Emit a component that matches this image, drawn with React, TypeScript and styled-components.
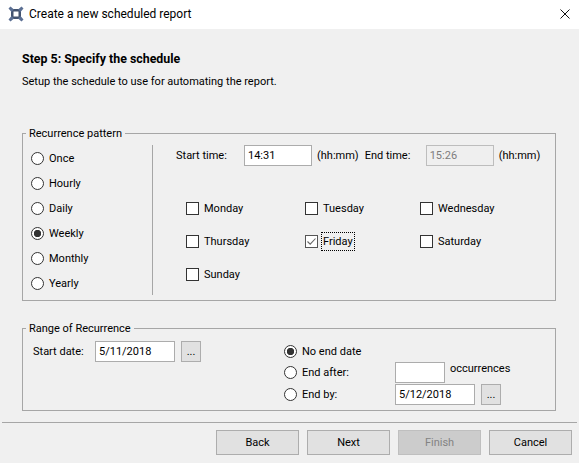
import React from 'react'
import styled, { createGlobalStyle } from 'styled-components'

const GlobalStyle = createGlobalStyle`
  html, body {
    margin: 0;
    padding: 0;
    background: #f0f0f0;
  }
  * {
    box-sizing: border-box;
  }
  body {
    font-family: Roboto, "Noto Sans", sans-serif;
    font-size: 11px;
    color: #000;
  }
`

const Window = styled.div`
  width: 579px;
  height: 463px;
  overflow: hidden;
  display: flex;
  flex-direction: column;
`
const TitleBar = styled.div`
  height: 29px;
  flex: none;
  background: #fff;
  display: flex;
  align-items: center;
  padding: 0 9px 1px 8px;
  gap: 5px;
  font-size: 12px;
`
const TitleText = styled.div`
  flex: 1;
`
const Content = styled.div`
  flex: 1;
  padding: 22px 23px 0 22px;
`
const StepTitle = styled.div`
  font-weight: bold;
  font-size: 12.4px;
  line-height: 16px;
`
const StepText = styled.div`
  margin-top: 7px;
  line-height: 16px;
`
const Group = styled.fieldset<{ $height: number; $top: number }>`
  margin: ${p => p.$top}px 0 0;
  padding: 0;
  height: ${p => p.$height}px;
  border: 1px solid #a6a6a6;
  min-width: 0;
`
const GroupLegend = styled.legend`
  margin-left: 3px;
  padding: 0 3px;
  height: 15px;
  line-height: 15px;
`
const PatternBody = styled.div`
  display: flex;
  padding-top: 4px;
  height: 100%;
`
const RadioColumn = styled.div`
  width: 130px;
  flex: none;
  height: 150px;
  border-right: 1px solid #a6a6a6;
  display: flex;
  flex-direction: column;
  padding: 1px 0 0 8px;
`
const RadioRow = styled.label<{ $height: number }>`
  display: flex;
  flex: none;
  align-items: center;
  gap: 5px;
  height: ${p => p.$height}px;
`
const RadioDot = styled.span<{ $on?: boolean }>`
  width: 13px;
  height: 13px;
  flex: none;
  border-radius: 50%;
  border: 1px solid #333;
  background: ${p => (p.$on ? 'radial-gradient(circle, #333 0 3.4px, #fff 4px)' : '#fff')};
`
const PatternRight = styled.div`
  flex: 1;
  padding: 0 0 0 23px;
`
const TimeRow = styled.div`
  display: flex;
  align-items: center;
  height: 21px;
`
const TimeLabel = styled.span<{ $width: number; $indent?: number }>`
  width: ${p => p.$width}px;
  padding-left: ${p => p.$indent || 0}px;
  flex: none;
`
const Field = styled.div<{ $width: number; $disabled?: boolean }>`
  width: ${p => p.$width}px;
  height: 21px;
  flex: none;
  border: 1px solid ${p => (p.$disabled ? '#bdbdbd' : '#acacac')};
  background: ${p => (p.$disabled ? '#efefef' : '#fff')};
  color: ${p => (p.$disabled ? '#7d7d7d' : '#000')};
  padding: 0 3px;
  line-height: 19px;
`
const Unit = styled.span`
  margin-left: 5px;
  flex: none;
`
const DayGrid = styled.div`
  display: grid;
  grid-template-columns: 119px 115px 1fr;
  grid-auto-rows: 33px;
  margin: 26px 0 0 10px;
`
const DayItem = styled.label`
  display: flex;
  align-items: center;
  gap: 4px;
  height: 33px;
`
const CheckBox = styled.span<{ $on?: boolean }>`
  width: 13px;
  height: 13px;
  flex: none;
  background: #fff;
  border: 1px solid ${p => (p.$on ? '#555' : '#333')};
  display: flex;
  align-items: center;
  justify-content: center;
`
const DayLabel = styled.span<{ $focused?: boolean }>`
  line-height: 15px;
  padding: 1px;
  outline: ${p => (p.$focused ? '1px dotted #000' : 'none')};
`
const RangeBody = styled.div`
  display: flex;
  padding: 5px 0 0 10px;
`
const RangeStart = styled.div`
  width: 251px;
  flex: none;
  display: flex;
  align-items: flex-start;
`
const StartLabel = styled.span`
  width: 62px;
  flex: none;
  line-height: 21px;
`
const DotsButton = styled.div`
  width: 20px;
  height: 21px;
  flex: none;
  margin-left: 6px;
  background: #e1e1e1;
  border: 1px solid #adadad;
  text-align: center;
  line-height: 20px;
`
const RangeEnd = styled.div`
  display: grid;
  grid-template-columns: 111px 50px auto 1fr;
  grid-template-rows: 20px 22px 22px;
  align-items: center;
`
const RangeRadio = styled(RadioRow)`
  grid-column: 1;
`
const NoEnd = styled(RadioRow)`
  grid-column: 1 / 4;
`
const Occurrences = styled.span`
  margin: -8px 0 0 5px;
`
const EndDateRow = styled.div`
  grid-column: 2 / 5;
  display: flex;
`
const ActionsLine = styled.div`
  height: 1px;
  margin: 0 2px;
  background: #a6a6a6;
  flex: none;
`
const Actions = styled.div`
  flex: none;
  height: 40px;
  display: flex;
  justify-content: flex-end;
  gap: 8px;
  padding: 7px 7px 0 0;
`
const ActionButton = styled.div<{ $disabled?: boolean }>`
  width: 83px;
  height: 25px;
  background: ${p => (p.$disabled ? '#cccccc' : '#e1e1e1')};
  border: 1px solid ${p => (p.$disabled ? '#bfbfbf' : '#adadad')};
  color: ${p => (p.$disabled ? '#838383' : '#000')};
  text-align: center;
  line-height: 24px;
`

const AppIcon = () => (
  <svg width="16" height="16" viewBox="0 0 16 16">
    <path d="M3 3h10v10H3z M5.5 5.5v5h5v-5z" fill="#43536f" fillRule="evenodd" />
    <path d="M.5 2.5 2.5.5 6 3.5 3.5 6z M15.5 2.5 13.5.5 10 3.5 12.5 6z M.5 13.5 2.5 15.5 6 12.5 3.5 10z M15.5 13.5 13.5 15.5 10 12.5 12.5 10z" fill="#5b6f93" />
  </svg>
)

const CloseIcon = () => (
  <svg width="10" height="10" viewBox="0 0 10 10">
    <path d="M0.5 0.5 9.5 9.5 M9.5 0.5 0.5 9.5" stroke="#111" strokeWidth="1" fill="none" />
  </svg>
)

const CheckMark = () => (
  <svg width="11" height="11" viewBox="0 0 11 11">
    <path d="M1.5 5.5 4.2 8.2 9.5 2.5" stroke="#666" strokeWidth="1.1" fill="none" />
  </svg>
)

const patterns = ['Once', 'Hourly', 'Daily', 'Weekly', 'Monthly', 'Yearly']
const days = ['Monday', 'Tuesday', 'Wednesday', 'Thursday', 'Friday', 'Saturday', 'Sunday']

const App = () => (
  <Window>
    <GlobalStyle />
    <TitleBar>
      <AppIcon />
      <TitleText>Create a new scheduled report</TitleText>
      <CloseIcon />
    </TitleBar>
    <Content>
      <StepTitle>Step 5: Specify the schedule</StepTitle>
      <StepText>Setup the schedule to use for automating the report.</StepText>
      <Group $top={36} $height={175}>
        <GroupLegend>Recurrence pattern</GroupLegend>
        <PatternBody>
          <RadioColumn>
            {patterns.map(name => (
              <RadioRow key={name} $height={25}>
                <RadioDot $on={name === 'Weekly'} />
                {name}
              </RadioRow>
            ))}
          </RadioColumn>
          <PatternRight>
            <TimeRow>
              <TimeLabel $width={68}>Start time:</TimeLabel>
              <Field $width={68}>14:31</Field>
              <Unit>(hh:mm)</Unit>
              <TimeLabel $width={67} $indent={6}>End time:</TimeLabel>
              <Field $width={68} $disabled>15:26</Field>
              <Unit>(hh:mm)</Unit>
            </TimeRow>
            <DayGrid>
              {days.map(day => (
                <DayItem key={day}>
                  <CheckBox $on={day === 'Friday'}>{day === 'Friday' && <CheckMark />}</CheckBox>
                  <DayLabel $focused={day === 'Friday'}>{day}</DayLabel>
                </DayItem>
              ))}
            </DayGrid>
          </PatternRight>
        </PatternBody>
      </Group>
      <Group $top={20} $height={90}>
        <GroupLegend>Range of Recurrence</GroupLegend>
        <RangeBody>
          <RangeStart>
            <StartLabel>Start date:</StartLabel>
            <Field $width={80}>5/11/2018</Field>
            <DotsButton>...</DotsButton>
          </RangeStart>
          <RangeEnd>
            <NoEnd $height={20}>
              <RadioDot $on />
              No end date
            </NoEnd>
            <RangeRadio $height={22}>
              <RadioDot />
              End after:
            </RangeRadio>
            <Field $width={50}>&nbsp;</Field>
            <Occurrences>occurrences</Occurrences>
            <RangeRadio $height={22}>
              <RadioDot />
              End by:
            </RangeRadio>
            <EndDateRow>
              <Field $width={80}>5/12/2018</Field>
              <DotsButton>...</DotsButton>
            </EndDateRow>
          </RangeEnd>
        </RangeBody>
      </Group>
    </Content>
    <ActionsLine />
    <Actions>
      <ActionButton>Back</ActionButton>
      <ActionButton>Next</ActionButton>
      <ActionButton $disabled>Finish</ActionButton>
      <ActionButton>Cancel</ActionButton>
    </Actions>
  </Window>
)

export default App
